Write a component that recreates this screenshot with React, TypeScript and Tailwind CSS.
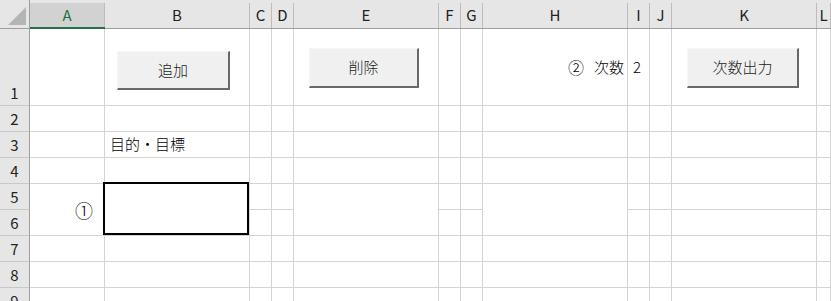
import React from "react";

const cols = ["A", "B", "C", "D", "E", "F", "G", "H", "I", "J", "K", "L"];

const cell = "border-r border-b border-[#d4d4d4] bg-white relative";
const rowHead =
  "bg-[#e6e6e6] border-r border-[#9e9e9e] border-b border-b-[#c8c8c8] flex items-end justify-center pb-[2px] text-[15px] leading-[20px] font-normal text-[#222]";

function Btn({ label, cls }: { label: string; cls: string }) {
  return (
    <div
      className={
        "absolute bg-[#f0f0f0] border-t border-l border-t-[#f7f7f7] border-l-[#f7f7f7] border-r-2 border-b-2 border-r-[#696969] border-b-[#696969] flex items-center justify-center text-[15px] text-[#222] " +
        cls
      }
    >
      {label}
    </div>
  );
}

export default function App() {
  const rows: React.ReactNode[] = [];
  for (let r = 1; r <= 9; r++) {
    rows.push(
      <div key={"h" + r} className={rowHead}>
        {r}
      </div>
    );
    cols.forEach((c) => {
      if (r === 6 && (c === "A" || c === "B" || c === "E" || c === "H")) return;
      const span = r === 5 && (c === "A" || c === "B" || c === "E" || c === "H");
      let content: React.ReactNode = null;
      let extra = "";
      if (r === 1 && c === "H") {
        extra = " flex items-center justify-end pr-[3px]";
        content = (
          <span className="text-[15px] text-black flex items-center">
            <span className="text-[16px]">②</span>
            <span className="inline-block w-[10px]" />次数
          </span>
        );
      }
      if (r === 1 && c === "I") {
        extra = " flex items-center pl-[5px]";
        content = <span className="text-[15px] text-black">2</span>;
      }
      if (r === 3 && c === "B") {
        extra = " flex items-center pl-[5px]";
        content = <span className="text-[15px] text-black whitespace-nowrap">目的・目標</span>;
      }
      if (r === 5 && c === "A") {
        extra = " flex items-center justify-end pr-[11px]";
        content = <span className="text-[18px] leading-none text-black">①</span>;
      }
      if (r === 5 && c === "B") {
        content = (
          <div className="absolute left-[-2px] top-[-2px] w-[146px] h-[53px] border-2 border-black" />
        );
      }
      rows.push(
        <div key={c + r} className={cell + (span ? " row-span-2" : "") + extra}>
          {content}
        </div>
      );
    });
  }

  return (
    <div className="relative w-[831px] h-[301px] overflow-hidden bg-white font-light font-['Noto_Sans_CJK_JP','Noto_Sans',sans-serif]">
      <div className="grid grid-cols-[30px_75px_145px_22px_22px_145px_22px_22px_145px_22px_22px_145px_1fr] grid-rows-[29px_77px_repeat(8,26px)_26px]">
        <div className="bg-[#e6e6e6] border-r border-b border-[#9e9e9e] relative">
          <svg className="absolute left-0 top-0" width="29" height="28">
            <polygon points="8,25 26,25 26,7" fill="#b5b5b5" />
          </svg>
        </div>
        {cols.map((c) =>
          c === "A" ? (
            <div key={"col" + c} className="bg-[#e6e6e6] pt-[3px] border-b-2 border-[#217346]">
              <div className="h-full bg-[#d2d2d2] border-r border-[#bcbcbc] flex items-center justify-center text-[15px] font-normal text-[#217346]">
                {c}
              </div>
            </div>
          ) : (
            <div key={"col" + c} className="bg-[#e6e6e6] pt-[3px] border-b border-[#9e9e9e]">
              <div className="h-full border-r border-[#bcbcbc] flex items-center justify-center text-[15px] font-normal text-[#222]">
                {c}
              </div>
            </div>
          )
        )}
        {rows}
      </div>
      <Btn label="追加" cls="left-[117px] top-[51px] w-[113px] h-[39px]" />
      <Btn label="削除" cls="left-[309px] top-[48px] w-[110px] h-[40px]" />
      <Btn label="次数出力" cls="left-[687px] top-[48px] w-[112px] h-[40px]" />
    </div>
  );
}
